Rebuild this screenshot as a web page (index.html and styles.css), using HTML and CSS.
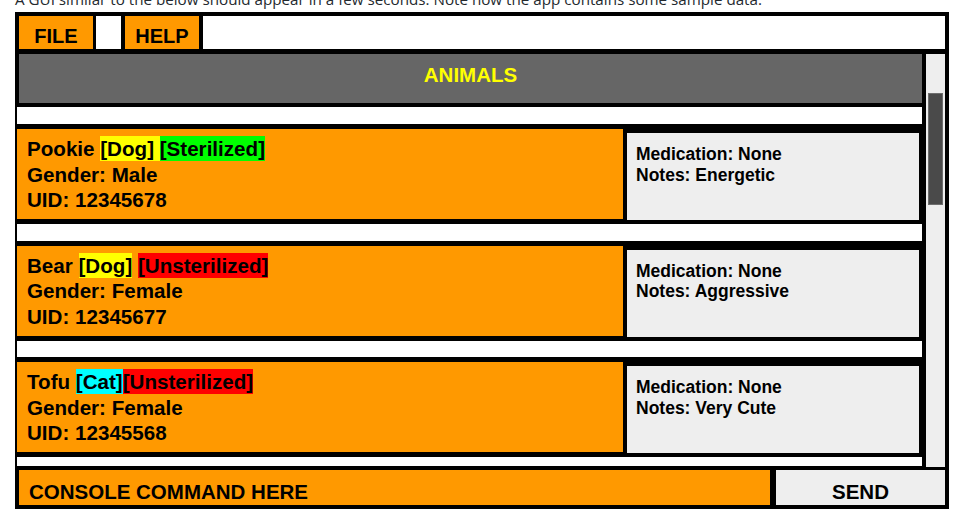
FILE: index.html
```html
<!DOCTYPE html>
<html lang="en">
<head>
<meta charset="utf-8">
<title>Animals GUI</title>
<link rel="stylesheet" href="styles.css">
</head>
<body>
<div class="page">
  <p class="lede">A GUI similar to the below should appear in a few seconds. Note how the app contains some sample data.</p>
  <div class="app">
    <div class="menubar">
      <div class="menu-item">FILE</div>
      <div class="menu-blank"></div>
      <div class="menu-item">HELP</div>
      <div class="menu-fill"></div>
    </div>
    <div class="main">
      <div class="content">
        <div class="header">ANIMALS</div>
        <div class="list">
          <div class="card">
            <div class="card-main">
              <div>Pookie <span class="tag tag-dog">[Dog] </span><span class="tag tag-ster">[Sterilized]</span></div>
              <div>Gender: Male</div>
              <div>UID: 12345678</div>
            </div>
            <div class="card-side">
              <div>Medication: None</div>
              <div>Notes: Energetic</div>
            </div>
          </div>
          <div class="card">
            <div class="card-main">
              <div>Bear <span class="tag tag-dog">[Dog]</span> <span class="tag tag-unster">[Unsterilized]</span></div>
              <div>Gender: Female</div>
              <div>UID: 12345677</div>
            </div>
            <div class="card-side">
              <div>Medication: None</div>
              <div>Notes: Aggressive</div>
            </div>
          </div>
          <div class="card">
            <div class="card-main">
              <div>Tofu <span class="tag tag-cat">[Cat]</span><span class="tag tag-unster">[Unsterilized]</span></div>
              <div>Gender: Female</div>
              <div>UID: 12345568</div>
            </div>
            <div class="card-side">
              <div>Medication: None</div>
              <div>Notes: Very Cute</div>
            </div>
          </div>
        </div>
      </div>
      <div class="scrollbar"><div class="thumb"></div></div>
    </div>
    <div class="bottombar">
      <div class="console">CONSOLE COMMAND HERE</div>
      <div class="send">SEND</div>
    </div>
  </div>
</div>
</body>
</html>
```
FILE: styles.css
```css
html, body {
  margin: 0;
  padding: 0;
  background: #ffffff;
}

.page {
  padding: 0 0 0 15px;
}

.lede {
  margin: -13px 0 1px;
  height: 24px;
  line-height: 24px;
  font-family: "Open Sans", "Noto Sans", sans-serif;
  font-size: 15.2px;
  color: #24292e;
  white-space: nowrap;
}

.app {
  width: 934px;
  height: 497px;
  box-sizing: border-box;
  background: #000000;
  padding: 4px 4px 4px 2px;
  display: flex;
  flex-direction: column;
  font-family: "Liberation Sans", Arial, sans-serif;
  font-weight: bold;
  color: #000000;
}

.menubar {
  height: 33px;
  display: flex;
  margin-left: 2px;
}

.menu-item {
  width: 74px;
  background: #ff9900;
  font-size: 20px;
  text-align: center;
  padding-top: 9px;
  box-sizing: border-box;
  line-height: normal;
}

.menu-blank {
  width: 25px;
  margin: 0 4px 0 3px;
  background: #ffffff;
}

.menu-fill {
  flex: 1;
  margin-left: 4px;
  background: #ffffff;
}

.main {
  margin-top: 5px;
  height: 413px;
  display: flex;
}

.content {
  width: 905px;
  display: flex;
  flex-direction: column;
}

.header {
  height: 49px;
  margin-left: 2px;
  box-sizing: border-box;
  background: #666666;
  color: #ffff00;
  font-size: 20.5px;
  text-align: center;
  padding-top: 9px;
}

.list {
  margin-top: 4px;
  height: 359px;
  background: #ffffff;
  overflow: hidden;
  padding-top: 17px;
  box-sizing: border-box;
  display: flex;
  flex-direction: column;
  gap: 16.5px;
}

.card {
  flex: none;
  height: 100px;
  box-sizing: border-box;
  background: #000000;
  padding: 5px 3px 5px 0;
  display: flex;
  gap: 4px;
}

.card-main {
  width: 606px;
  background: #ff9900;
  font-size: 20.6px;
  line-height: 25.5px;
  padding: 7px 0 0 10px;
  box-sizing: border-box;
}

.card-side {
  flex: 1;
  margin: 4px 0 -1px;
  background: #eeeeee;
  font-size: 17.5px;
  line-height: 20.5px;
  padding: 11px 0 0 9px;
  box-sizing: border-box;
}

.tag {
  padding: 1px 0;
}

.tag-dog { background: #ffff00; }
.tag-cat { background: #00ffff; }
.tag-ster { background: #00ff00; }
.tag-unster { background: #ff0000; }

.scrollbar {
  width: 19px;
  margin-left: 4px;
  background: #eeeeee;
  padding: 39px 2px 0;
  box-sizing: border-box;
}

.thumb {
  height: 112px;
  background: #4a4a4a;
  border: 1px solid #6e6e6e;
  box-sizing: border-box;
}

.bottombar {
  margin-top: 3px;
  height: 35px;
  display: flex;
  gap: 6px;
  margin-left: 2px;
}

.console {
  width: 751px;
  background: #ff9900;
  font-size: 20.5px;
  padding: 10px 0 0 10px;
  box-sizing: border-box;
  white-space: nowrap;
}

.send {
  flex: 1;
  background: #eeeeee;
  font-size: 20.5px;
  text-align: center;
  padding-top: 10px;
  box-sizing: border-box;
}
```
